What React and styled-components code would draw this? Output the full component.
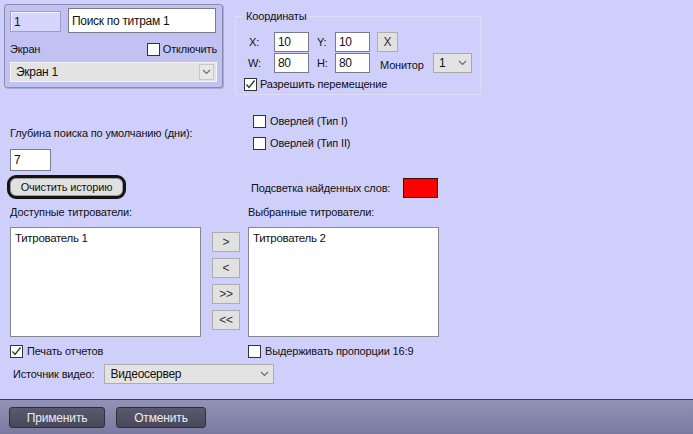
import React from "react";
import styled, { createGlobalStyle } from "styled-components";

const GlobalStyle = createGlobalStyle`
  html, body {
    margin: 0;
    padding: 0;
    background: #cfcffc;
  }
  * {
    box-sizing: border-box;
  }
`;

const Window = styled.div`
  width: 693px;
  height: 434px;
  display: flex;
  flex-direction: column;
  font-family: "Liberation Sans", Arial, sans-serif;
  font-size: 11px;
  letter-spacing: -0.15px;
  color: #111;
  background: #cfcffc;
  overflow: hidden;
`;

const Main = styled.div`
  height: 399px;
  display: flex;
  flex-direction: column;
`;

const TopRow = styled.div`
  display: flex;
  align-items: flex-start;
  padding: 4px 0 0 4px;
  height: 95px;
`;

const Panel = styled.div`
  width: 219px;
  height: 84px;
  border: 1px solid #8b8bb2;
  border-radius: 3px;
  background: #c2c2f2;
  box-shadow: 1px 1px 0 #a9a9d6;
  padding: 3px 5px 0 5px;
`;

const PanelRow = styled.div`
  display: flex;
  align-items: ${(p) => p.$align || "center"};
  justify-content: ${(p) => p.$justify || "flex-start"};
  gap: ${(p) => p.$gap || 0}px;
  height: ${(p) => p.$h}px;
  margin-top: ${(p) => p.$mt || 0}px;
`;

const Field = styled.div`
  width: ${(p) => p.$w}px;
  height: ${(p) => p.$h || 20}px;
  margin-top: ${(p) => p.$mt || 0}px;
  background: ${(p) => (p.$muted ? "#d5d5fd" : "#fff")};
  border: 1px solid ${(p) => (p.$muted ? "#9c9cc4" : "#7a7a8a")};
  box-shadow: ${(p) => (p.$muted ? "inset 1px 1px 0 #f2f2ff" : "none")};
  display: flex;
  align-items: center;
  padding-left: 3px;
  font-size: 12px;
  letter-spacing: -0.3px;
  white-space: nowrap;
`;

const Label = styled.span`
  display: inline-block;
  line-height: 14px;
  white-space: nowrap;
  width: ${(p) => (p.$w ? `${p.$w}px` : "auto")};
  padding-left: ${(p) => p.$pl || 0}px;
  margin-top: ${(p) => p.$mt || 0}px;
`;

const SelectBox = styled.div`
  width: ${(p) => p.$w}px;
  height: 20px;
  background: #e3e3e3;
  border: 1px solid ${(p) => p.$border || "#f4f4f4"};
  display: flex;
  align-items: center;
  justify-content: space-between;
  padding: 0 2px 0 5px;
  font-size: 12px;
  letter-spacing: -0.3px;
`;

const DropBtn = styled.div`
  width: ${(p) => (p.$flat ? 14 : 15)}px;
  height: 16px;
  display: flex;
  align-items: center;
  justify-content: center;
  border: ${(p) => (p.$flat ? "none" : "1px solid #c8c8c8")};
  background: ${(p) => (p.$flat ? "transparent" : "#e8e8e8")};
`;

const Chevron = () => (
  <svg width="9" height="6" viewBox="0 0 9 6">
    <path d="M1 1 L4.5 4.5 L8 1" fill="none" stroke="#6b6b6b" strokeWidth="1.1" />
  </svg>
);

const Group = styled.fieldset`
  margin: 5px 0 0 12px;
  width: 246px;
  height: 86px;
  border: 1px solid #dcdcf6;
  padding: 0 0 0 8px;
`;

const Legend = styled.legend`
  padding: 0 2px;
  margin-left: 0;
  line-height: 14px;
`;

const CoordRow = styled.div`
  display: flex;
  align-items: center;
  height: 20px;
  margin-top: ${(p) => p.$mt || 0}px;
`;

const SmallBtn = styled.div`
  width: ${(p) => p.$w}px;
  height: 20px;
  margin-left: ${(p) => p.$ml || 0}px;
  background: #e1e1e1;
  border: 1px solid #adadad;
  display: flex;
  align-items: center;
  justify-content: center;
  font-size: 12px;
  color: #333;
`;

const CheckWrap = styled.div`
  display: flex;
  align-items: center;
  gap: ${(p) => p.$gap || 4}px;
  height: 14px;
  margin-left: ${(p) => p.$ml || 0}px;
  margin-top: ${(p) => p.$mt || 0}px;
  line-height: 14px;
  white-space: nowrap;
`;

const Box = styled.div`
  width: 13px;
  height: 13px;
  background: #fff;
  border: 1px solid #333;
  display: flex;
  align-items: center;
  justify-content: center;
`;

const Check = ({ checked, label, ml, mt, gap }) => (
  <CheckWrap $ml={ml} $mt={mt} $gap={gap}>
    <Box>
      {checked && (
        <svg width="11" height="11" viewBox="0 0 11 11">
          <path d="M1.5 5.5 L4 8.5 L9.5 1.5" fill="none" stroke="#333" strokeWidth="1.3" />
        </svg>
      )}
    </Box>
    <span>{label}</span>
  </CheckWrap>
);

const MidRow = styled.div`
  display: grid;
  grid-template-columns: 238px 1fr;
  padding-left: 10px;
  height: 104px;
`;

const Col = styled.div`
  display: flex;
  flex-direction: column;
  align-items: flex-start;
  padding-top: ${(p) => p.$pt || 0}px;
`;

const ClearBtn = styled.div`
  margin: 4px 0 0 -3px;
  width: 119px;
  height: 24px;
  border: 3px solid #141414;
  border-radius: 9px;
  background: #e1e1e1;
  box-shadow: inset 0 0 0 1px #9d9d9d;
  display: flex;
  align-items: center;
  justify-content: center;
`;

const ColorRow = styled.div`
  display: flex;
  align-items: center;
  margin-top: 28px;
  padding-left: 3px;
  height: 20px;
`;

const Swatch = styled.div`
  width: 35px;
  height: 20px;
  margin-left: 13px;
  background: ${(p) => p.$c};
  border: 1px solid #3a1010;
`;

const ListsGrid = styled.div`
  display: grid;
  grid-template-columns: 191px 47px 191px;
  grid-template-rows: 14px 110px;
  row-gap: 8px;
  padding-left: 10px;
  margin-top: 6px;
`;

const ListBox = styled.div`
  background: #fff;
  border: 1px solid #828790;
  padding: 3px 4px;
  line-height: 14px;
  font-size: 11.5px;
  letter-spacing: -0.3px;
`;

const Arrows = styled.div`
  display: flex;
  flex-direction: column;
  gap: 6px;
  padding: 5px 0 0 11px;
`;

const BottomChecks = styled.div`
  display: grid;
  grid-template-columns: 238px 1fr;
  padding-left: 10px;
  margin-top: 7px;
`;

const SourceRow = styled.div`
  display: flex;
  align-items: center;
  padding-left: 13px;
  margin-top: 6px;
  gap: 10px;
`;

const Footer = styled.div`
  height: 35px;
  border-top: 1px solid #3b3b4e;
  background: linear-gradient(#9292b5, #7a7aa1);
  display: flex;
  align-items: center;
  padding: 0 0 0 9px;
  gap: 11px;
`;

const DarkBtn = styled.div`
  width: ${(p) => p.$w}px;
  height: 21px;
  border: 1px solid #2e2e3c;
  border-radius: 3px;
  background: linear-gradient(#5a5a6c, #48485a);
  color: #ececf4;
  display: flex;
  align-items: center;
  justify-content: center;
  font-size: 12px;
  margin-top: 1px;
`;

export default function App() {
  return (
    <Window>
      <GlobalStyle />
      <Main>
        <TopRow>
          <Panel>
            <PanelRow $h={26} $gap={7} $align="flex-start">
              <Field $w={51} $h={21} $mt={3} $muted>1</Field>
              <Field $w={148} $h={25}>Поиск по титрам 1</Field>
            </PanelRow>
            <PanelRow $h={20} $justify="space-between" $mt={5}>
              <Label>Экран</Label>
              <Check label="Отключить" gap={3} />
            </PanelRow>
            <PanelRow $h={21} $mt={2}>
              <SelectBox $w={207}>
                <span>Экран 1</span>
                <DropBtn>
                  <Chevron />
                </DropBtn>
              </SelectBox>
            </PanelRow>
          </Panel>
          <Group>
            <Legend>Координаты</Legend>
            <CoordRow $mt={9}>
              <Label $w={30} $pl={5}>X:</Label>
              <Field $w={35}>10</Field>
              <Label $w={26} $pl={8}>Y:</Label>
              <Field $w={35}>10</Field>
              <SmallBtn $w={21} $ml={7}>X</SmallBtn>
            </CoordRow>
            <CoordRow $mt={1}>
              <Label $w={30} $pl={4}>W:</Label>
              <Field $w={35}>80</Field>
              <Label $w={26} $pl={8}>H:</Label>
              <Field $w={35}>80</Field>
              <Label $w={63} $pl={10} $mt={4}>Монитор</Label>
              <SelectBox $w={39} $border="#a8a8a8">
                <span>1</span>
                <DropBtn $flat>
                  <Chevron />
                </DropBtn>
              </SelectBox>
            </CoordRow>
            <Check checked label="Разрешить перемещение" mt={4} gap={3} />
          </Group>
        </TopRow>

        <MidRow>
          <Col $pt={31}>
            <Label>Глубина поиска по умолчанию (дни):</Label>
            <Field $w={41} $h={22} $mt={9}>7</Field>
            <ClearBtn>Очистить историю</ClearBtn>
          </Col>
          <Col $pt={19}>
            <Check label="Оверлей (Тип I)" ml={5} />
            <Check label="Оверлей (Тип II)" ml={5} mt={8} />
            <ColorRow>
              <Label>Подсветка найденных слов:</Label>
              <Swatch $c="#ff0000" />
            </ColorRow>
          </Col>
        </MidRow>

        <ListsGrid>
          <Label>Доступные титрователи:</Label>
          <span />
          <Label>Выбранные титрователи:</Label>
          <ListBox>Титрователь 1</ListBox>
          <Arrows>
            <SmallBtn $w={28}>&gt;</SmallBtn>
            <SmallBtn $w={28}>&lt;</SmallBtn>
            <SmallBtn $w={28}>&gt;&gt;</SmallBtn>
            <SmallBtn $w={28}>&lt;&lt;</SmallBtn>
          </Arrows>
          <ListBox>Титрователь 2</ListBox>
        </ListsGrid>

        <BottomChecks>
          <Check checked label="Печать отчетов" />
          <Check label="Выдерживать пропорции 16:9" />
        </BottomChecks>

        <SourceRow>
          <Label>Источник видео:</Label>
          <SelectBox $w={170} $border="#adadad">
            <span>Видеосервер</span>
            <DropBtn $flat>
              <Chevron />
            </DropBtn>
          </SelectBox>
        </SourceRow>
      </Main>
      <Footer>
        <DarkBtn $w={96}>Применить</DarkBtn>
        <DarkBtn $w={90}>Отменить</DarkBtn>
      </Footer>
    </Window>
  );
}
